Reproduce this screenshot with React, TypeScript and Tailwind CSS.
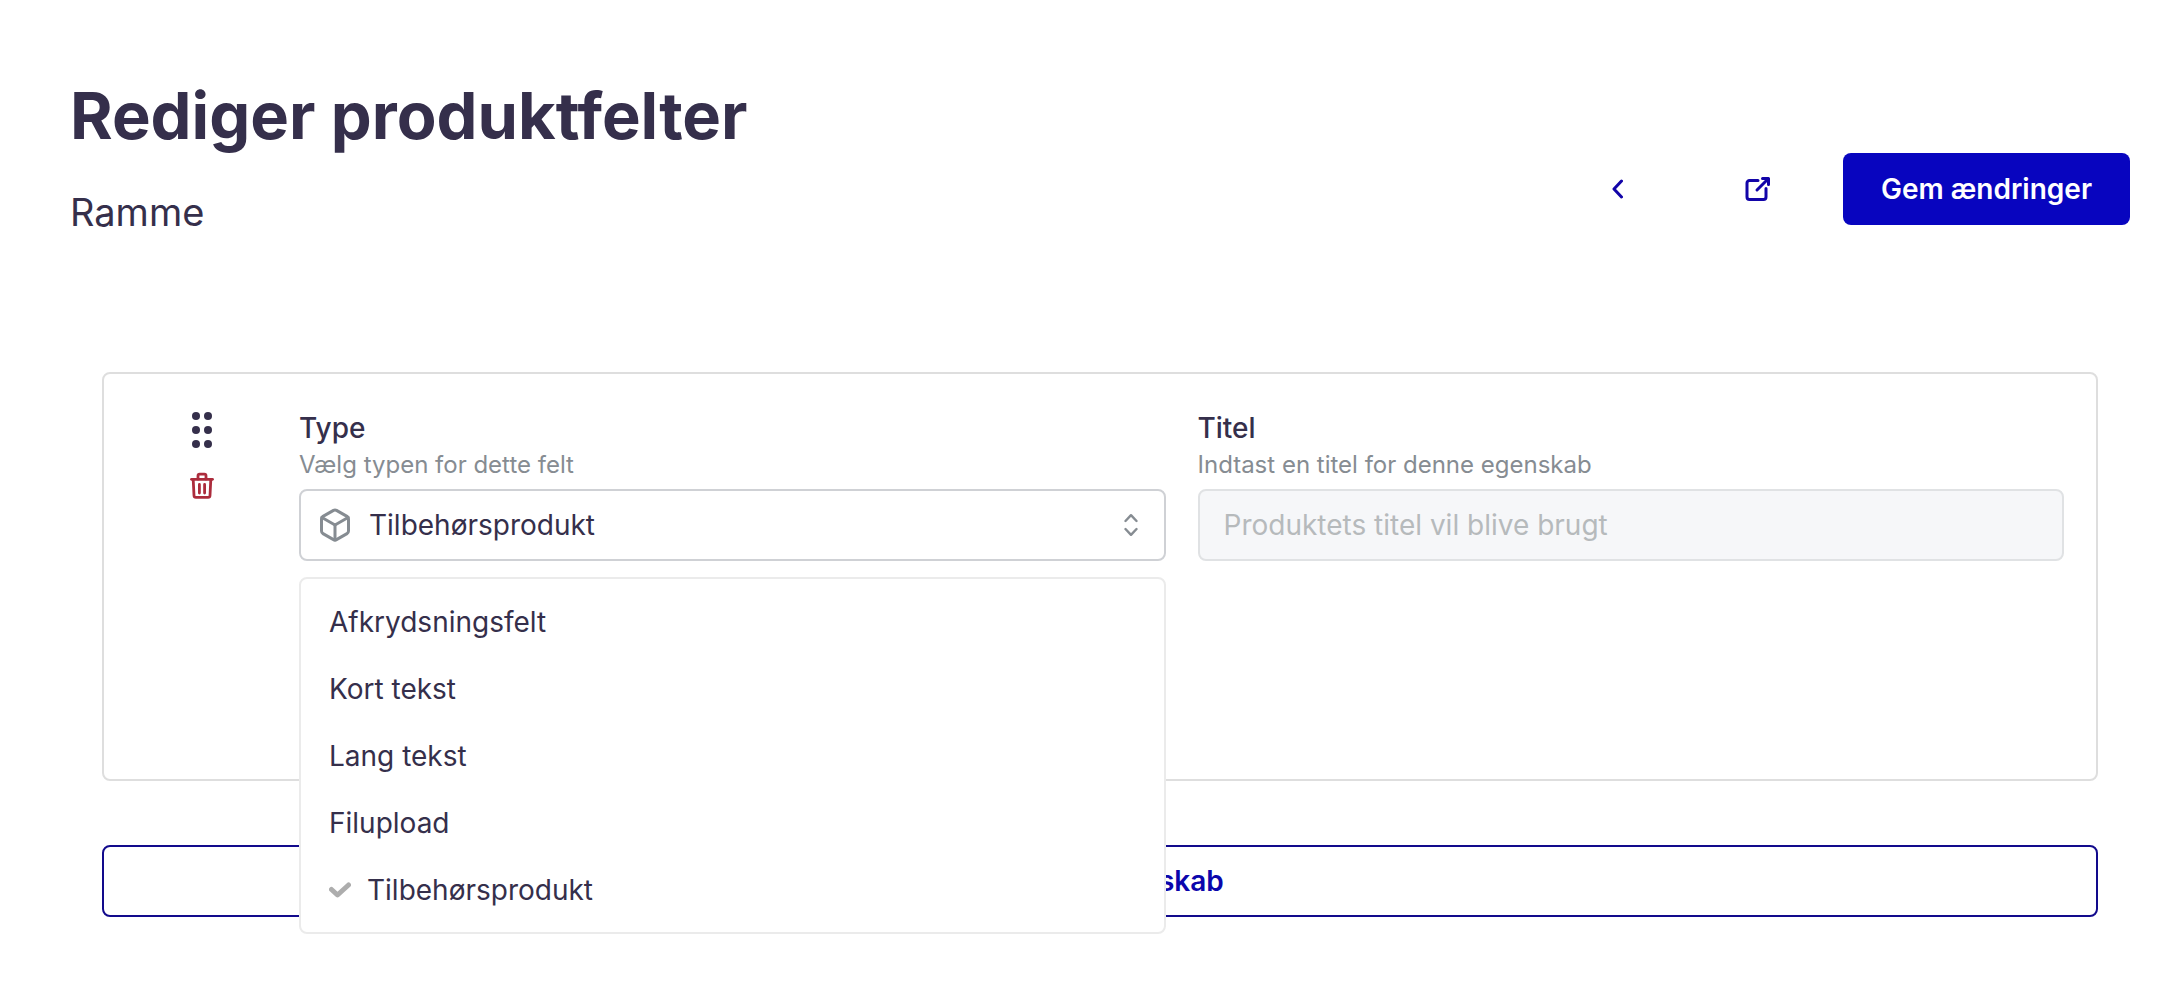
import React, { useState } from "react";
import { Box } from "lucide-react";

const FIELD_TYPES = ["Afkrydsningsfelt", "Kort tekst", "Lang tekst", "Filupload", "Tilbehørsprodukt"];

function BackIcon() {
  return (
    <svg width="12" height="20" viewBox="0 0 12 20" fill="none" stroke="currentColor" strokeWidth="3" strokeLinecap="round" strokeLinejoin="round" aria-hidden="true">
      <path d="M10.5 2 3 10l7.5 8" />
    </svg>
  );
}

function ExternalIcon() {
  return (
    <svg width="28" height="28" viewBox="0 0 28 28" fill="none" stroke="currentColor" strokeWidth="3" strokeLinecap="round" strokeLinejoin="round" aria-hidden="true">
      <path d="M15 5.5H6.500A2.500 2.500 0 0 0 4 8v14a2.500 2.500 0 0 0 2.500 2.500h14A2.500 2.500 0 0 0 23 22v-8.500" />
      <path d="M19.500 3.500h6v6" />
      <path d="M25 4 14 15" />
    </svg>
  );
}

function DragIcon() {
  return (
    <svg width="20" height="36" viewBox="0 0 20 36" fill="currentColor" aria-hidden="true">
      {[4, 18, 32].map((y) => (
        <React.Fragment key={y}>
          <circle cx="4" cy={y} r="4" />
          <circle cx="16" cy={y} r="4" />
        </React.Fragment>
      ))}
    </svg>
  );
}

function TrashIcon() {
  return (
    <svg width="24" height="28" viewBox="0 0 24 28" fill="none" stroke="currentColor" strokeWidth="2.8" strokeLinecap="round" strokeLinejoin="round" aria-hidden="true">
      <path d="M1.500 7.300h21" />
      <path d="M8 7V3.800A1.600 1.600 0 0 1 9.600 2.200h4.800A1.600 1.600 0 0 1 16 3.800V7" />
      <path d="M3.200 7.500 4 23.500a2 2 0 0 0 2 1.900h12a2 2 0 0 0 2-1.900l.8-16" />
      <path d="M9.400 12.500v8.500M14.600 12.500v8.500" />
    </svg>
  );
}

function UpDownIcon() {
  return (
    <svg width="14" height="24" viewBox="0 0 14 24" fill="none" stroke="currentColor" strokeWidth="2.4" strokeLinecap="round" strokeLinejoin="round" aria-hidden="true">
      <path d="M1.500 8 7 2.200 12.500 8M1.500 16 7 21.800 12.500 16" />
    </svg>
  );
}

function CheckIcon() {
  return (
    <svg width="22" height="18" viewBox="1 0 22 18" fill="none" stroke="#adadad" strokeWidth="5" strokeLinecap="round" strokeLinejoin="round" aria-hidden="true">
      <path d="M3.500 8.500 9.500 14 20.500 4" />
    </svg>
  );
}

interface FieldProps {
  id: string;
  label: string;
  hint: string;
  children: React.ReactNode;
}

function Field({ id, label, hint, children }: FieldProps) {
  return (
    <div className="flex-1 min-w-0">
      <label htmlFor={id} className="block text-[28px] leading-9 font-medium">
        {label}
      </label>
      <p id={`${id}-hint`} className="mb-[5px] text-2xl leading-[38px] text-[#868c92]">
        {hint}
      </p>
      {children}
    </div>
  );
}

export default function App() {
  const [type, setType] = useState("Tilbehørsprodukt");
  const [title, setTitle] = useState("");
  const [open, setOpen] = useState(true);
  const usesProductTitle = type === "Tilbehørsprodukt";

  return (
    <main className="min-h-screen bg-white pt-19 pl-[70px] pr-10 pb-16 font-['Inter',sans-serif] text-[#352f4b]">
      <header className="flex items-end justify-between">
        <div>
          <h1 className="text-[65px] leading-20 font-bold">Rediger produktfelter</h1>
          <p className="mt-7 text-[38px] leading-14">Ramme</p>
        </div>
        <div className="flex gap-8 pb-[15px]">
          <button type="button" aria-label="Tilbage" className="flex h-18 w-27 items-center justify-center text-[#1204a8]">
            <BackIcon />
          </button>
          <button type="button" aria-label="Åbn" className="flex h-18 w-27 items-center justify-center text-[#1204a8]">
            <ExternalIcon />
          </button>
          <button type="button" className="h-18 rounded-lg bg-[#0805bf] px-[38px] text-[28px] font-semibold text-white">
            Gem ændringer
          </button>
        </div>
      </header>

      <section className="mt-33 px-8">
        <div className="flex min-h-[409px] rounded-lg border-2 border-[#dedede] pt-9 pr-8">
          <div className="flex w-[195px] flex-col items-center gap-6 pt-0.5">
            <button type="button" aria-label="Flyt felt">
              <DragIcon />
            </button>
            <button type="button" aria-label="Slet felt" className="text-[#ac2c3c]">
              <TrashIcon />
            </button>
          </div>

          <div className="flex flex-1 gap-8">
            <Field id="type" label="Type" hint="Vælg typen for dette felt">
              <div className="relative">
                <select
                  id="type"
                  aria-describedby="type-hint"
                  value={type}
                  onChange={(e) => setType(e.target.value)}
                  className="block h-18 w-full appearance-none rounded-lg border-2 border-[#cfd1d5] bg-white pl-[68px] pr-16 text-[28px]"
                >
                  {FIELD_TYPES.map((t) => (
                    <option key={t}>{t}</option>
                  ))}
                </select>
                <Box size={36} className="pointer-events-none absolute left-[18px] top-[18px] text-[#868c92]" />
                <span className="pointer-events-none absolute right-7 top-6 text-[#868c92]">
                  <UpDownIcon />
                </span>

                {open && (
                  <ul role="listbox" aria-label="Type" className="absolute inset-x-0 top-22 z-10 rounded-lg border-2 border-[#ebebeb] bg-white py-[9px]">
                    {FIELD_TYPES.map((t) => (
                      <li key={t} role="option" aria-selected={t === type}>
                        <button
                          type="button"
                          onClick={() => {
                            setType(t);
                            setOpen(false);
                          }}
                          className="flex h-[67px] w-full items-center gap-4 px-7 text-left text-[28px]"
                        >
                          {t === type && <CheckIcon />}
                          {t}
                        </button>
                      </li>
                    ))}
                  </ul>
                )}
              </div>
            </Field>

            <Field id="title" label="Titel" hint="Indtast en titel for denne egenskab">
              <input
                id="title"
                type="text"
                aria-describedby="title-hint"
                value={title}
                onChange={(e) => setTitle(e.target.value)}
                disabled={usesProductTitle}
                placeholder={usesProductTitle ? "Produktets titel vil blive brugt" : ""}
                className="block h-18 w-full rounded-lg border-2 border-[#e0e2e4] bg-[#f6f7f9] px-6 text-[28px] placeholder:text-[#b6babc]"
              />
            </Field>
          </div>
        </div>

        <button type="button" className="mt-16 h-18 w-full rounded-lg border-2 border-[#120a8c] text-[28px] font-semibold text-[#0b06ac]">
          Tilføj ny egenskab
        </button>
      </section>
    </main>
  );
}
